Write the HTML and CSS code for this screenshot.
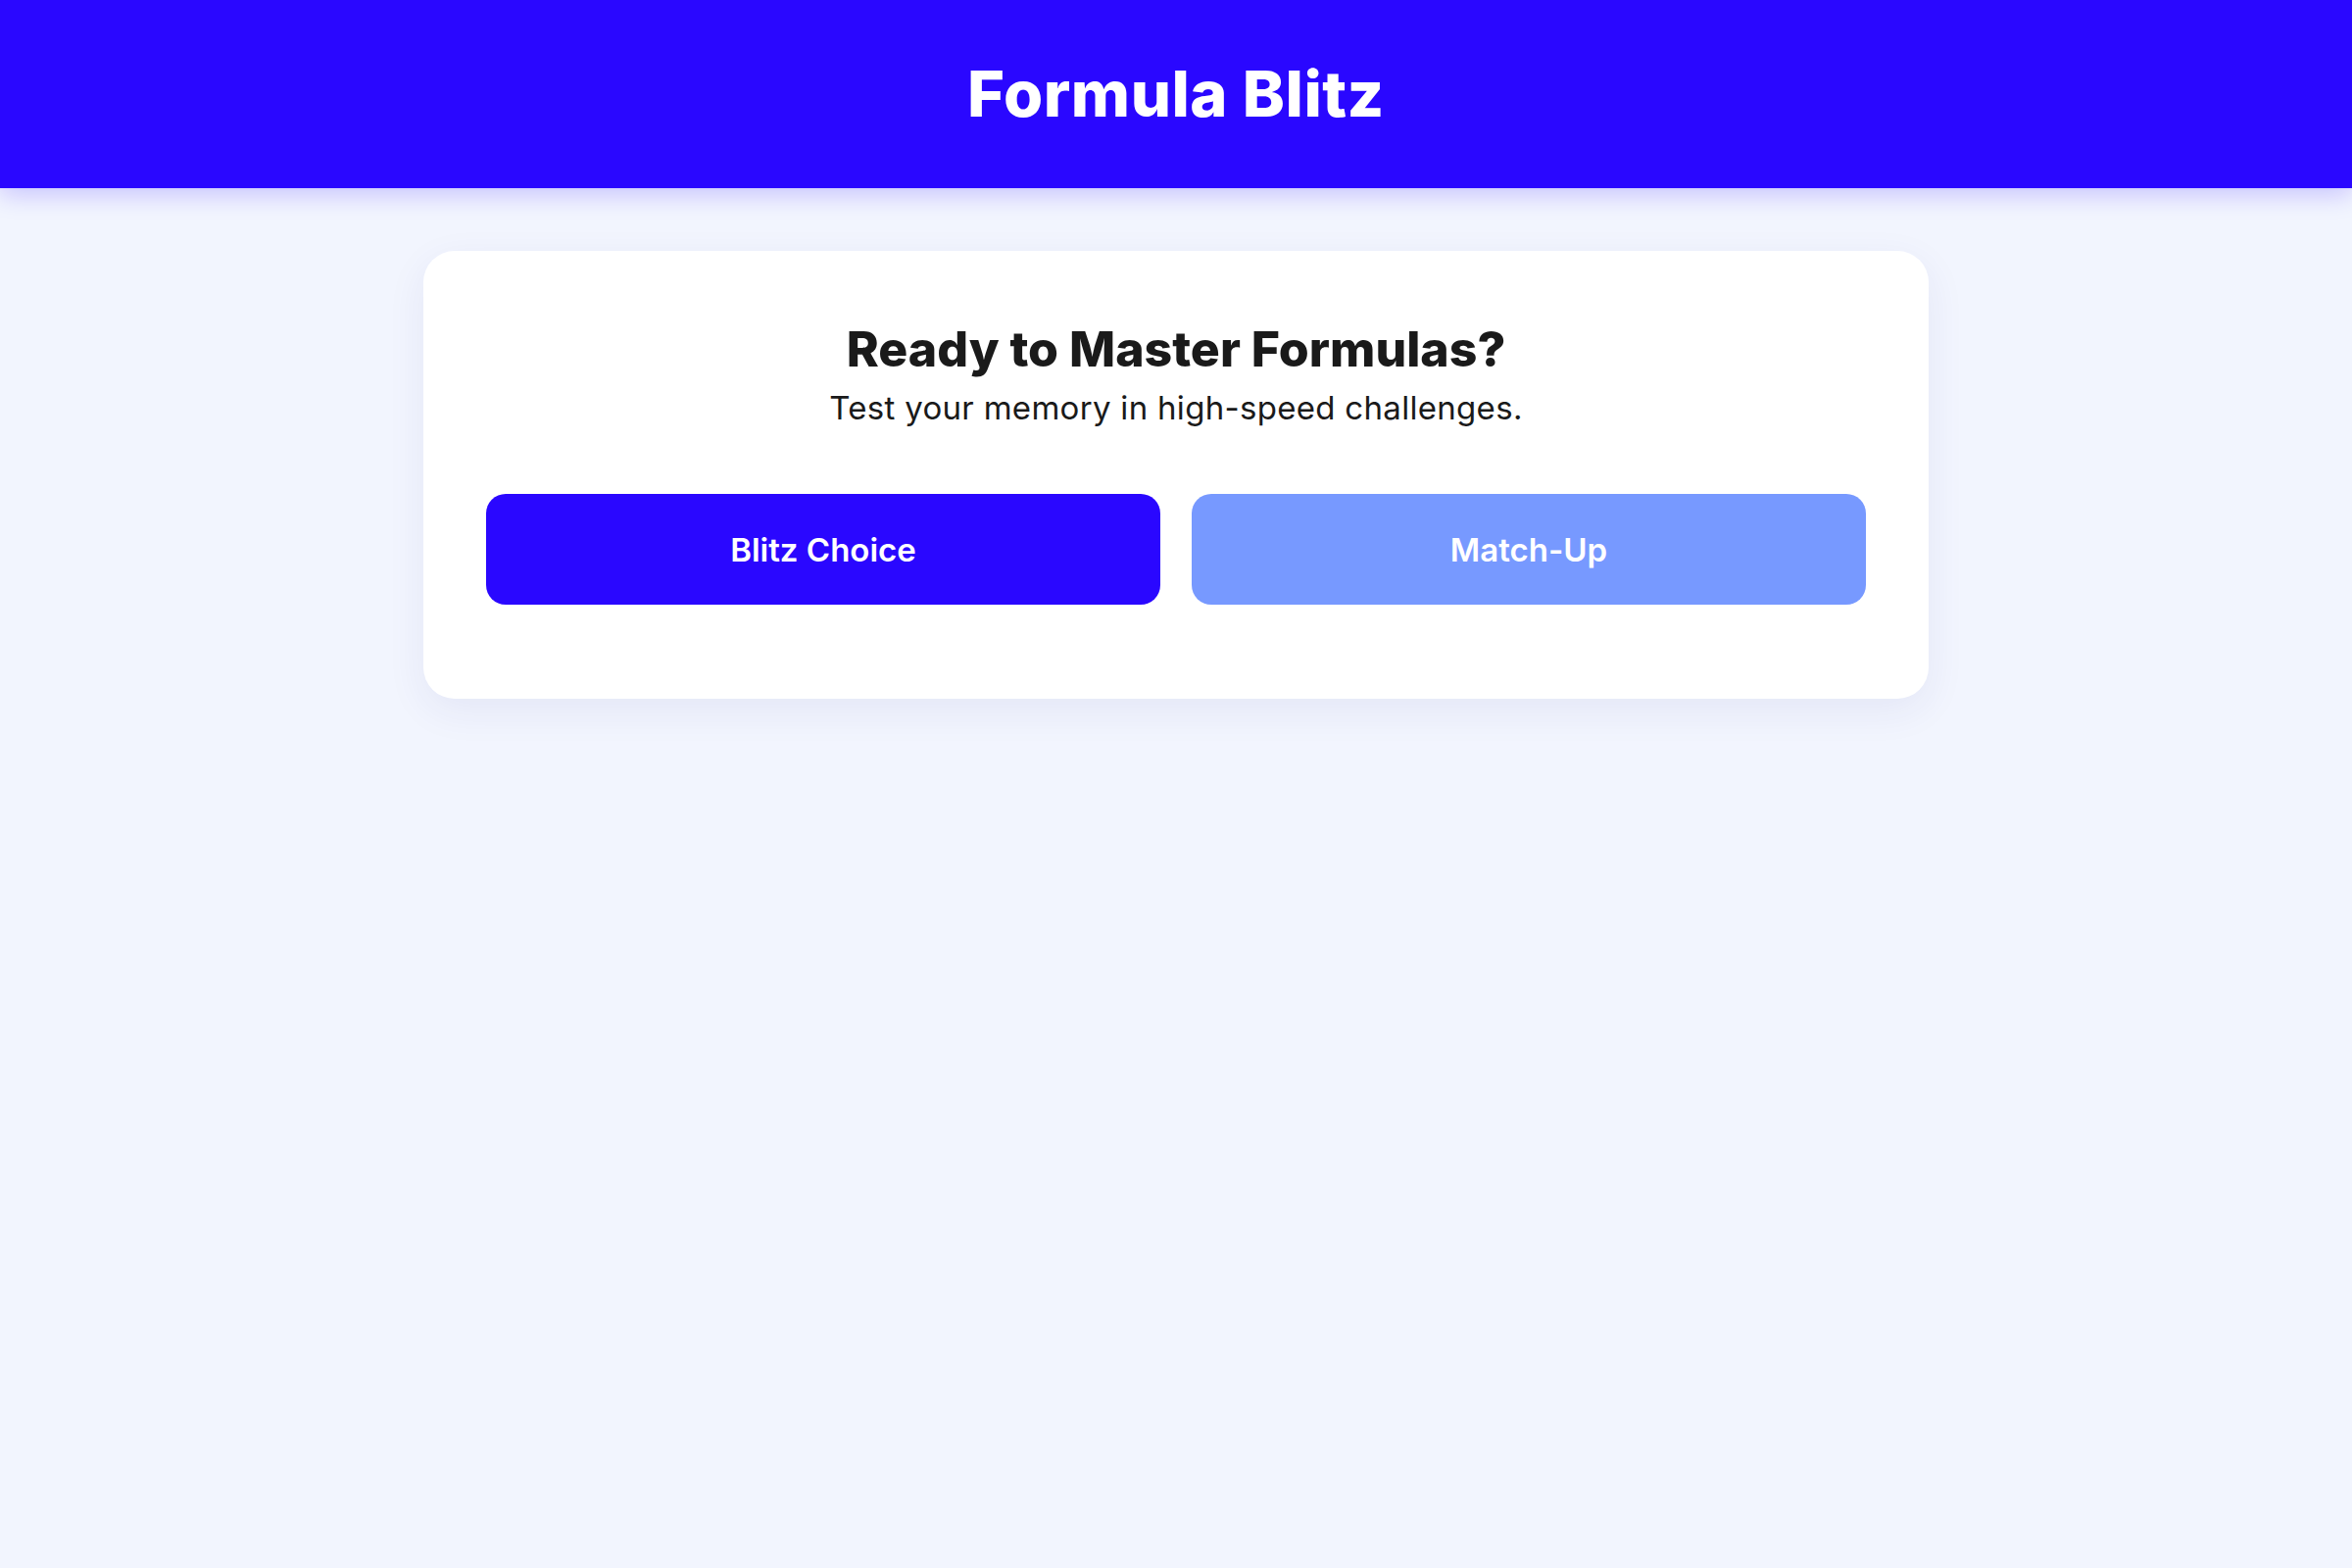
FILE: index.html
```html
<!DOCTYPE html>
<html lang="en">
<head>
<meta charset="utf-8">
<title>Formula Blitz</title>
<link rel="stylesheet" href="styles.css">
</head>
<body>
<header class="topbar">
  <h1 class="brand">Formula Blitz</h1>
</header>
<main class="main">
  <section class="card">
    <h2 class="card-title">Ready to Master Formulas?</h2>
    <p class="card-sub">Test your memory in high-speed challenges.</p>
    <div class="modes">
      <button class="mode mode-primary" type="button">Blitz Choice</button>
      <button class="mode mode-secondary" type="button">Match-Up</button>
    </div>
  </section>
</main>
</body>
</html>
```

FILE: styles.css
```css
* { box-sizing: border-box; }
html, body { margin: 0; padding: 0; }
body {
  background: #f2f5fe;
  font-family: "Inter", "Noto Sans", "Liberation Sans", sans-serif;
  color: #1a1a1a;
  min-height: 1600px;
}
.topbar {
  background: #2a07ff;
  height: 192px;
  display: flex;
  align-items: center;
  justify-content: center;
  box-shadow: 0 6px 24px rgba(42, 7, 255, 0.22);
}
.brand {
  margin: 0;
  color: #ffffff;
  font-size: 65px;
  font-weight: 800;
  letter-spacing: 0.5px;
  line-height: 1.5;
}
.main {
  padding-top: 64px;
  display: flex;
  justify-content: center;
}
.card {
  width: 1536px;
  background: #ffffff;
  border-radius: 32px;
  padding: 64px 64px 64px;
  box-shadow: 0 12px 40px rgba(40, 40, 140, 0.07);
  text-align: center;
}
.card-title {
  margin: 0;
  font-size: 50px;
  font-weight: 800;
  line-height: 72px;
  color: #1a1a1a;
}
.card-sub {
  margin: 0;
  font-size: 33px;
  font-weight: 400;
  line-height: 48px;
  color: #1a1a1a;
  letter-spacing: 0.3px;
}
.modes {
  display: flex;
  gap: 32px;
  margin-top: 64px;
  margin-bottom: 32px;
}
.mode {
  flex: 1;
  border: none;
  border-radius: 20px;
  height: 113px;
  font-family: inherit;
  font-size: 33px;
  font-weight: 600;
  color: #ffffff;
  cursor: pointer;
}
.mode-primary { background: #2a07ff; }
.mode-secondary { background: #7799ff; }
```
